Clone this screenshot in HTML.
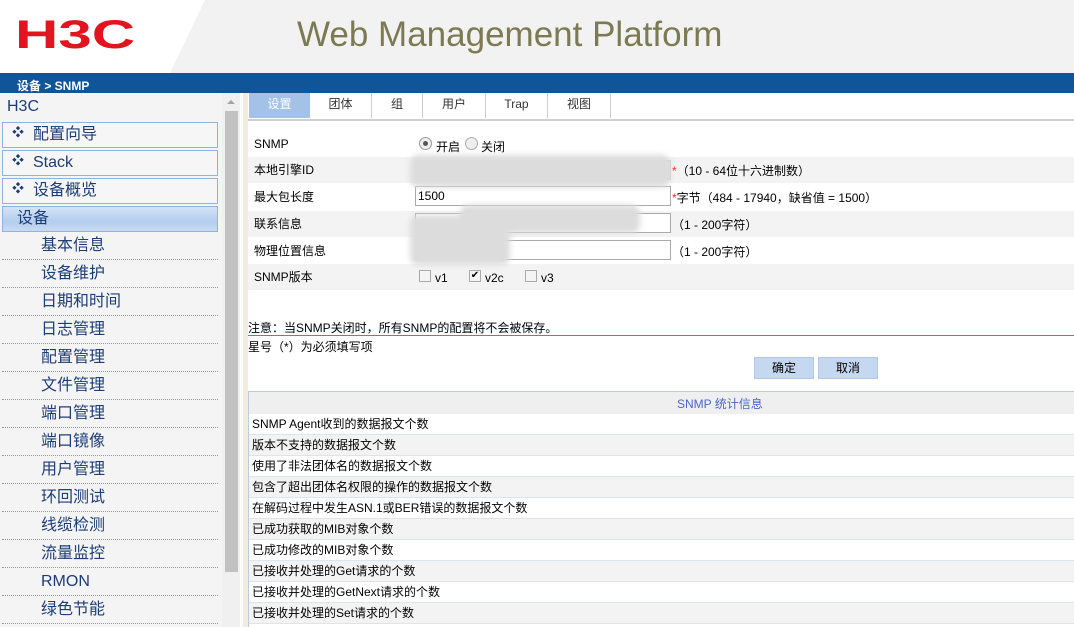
<!DOCTYPE html>
<html><head><meta charset="utf-8"><style>
*{margin:0;padding:0;box-sizing:border-box}
body{width:1074px;height:627px;overflow:hidden;position:relative;background:#fff;font-family:"Liberation Sans","Noto Sans CJK SC",sans-serif;font-size:12px;color:#000}
.a{position:absolute}
.side{left:0;top:93px;width:222px;height:534px;background:#f4f4f4}
.box{position:absolute;left:2px;width:216px;height:26px;border:1px solid #8fb2e0;background:#f6f6f6;font-size:16px;color:#1c3d78;line-height:24px;padding-left:30px}
.box:before{content:"❖";position:absolute;left:9px;top:-3px;font-size:12px;color:#1c3d78}
.sub{position:absolute;left:2px;width:216px;height:28px;border-bottom:1px dotted #999;font-size:16px;color:#1c3d78;line-height:28px;padding-left:39px}
.row{position:absolute;left:248px;width:826px;height:26px;line-height:26px;padding-left:6px;font-size:12px}
.g{background:#f3f3f3}
.inp{position:absolute;left:415px;width:256px;height:20px;border:1px solid #aaa;background:#fff}
.blur{position:absolute;background:#dcdcdc;filter:blur(3px);border-radius:8px}
.tab{position:absolute;top:93px;height:25px;line-height:22px;text-align:center;font-size:12px;color:#333;border-right:1px solid #ccc}
.st{position:absolute;left:248px;width:826px;height:21px;line-height:21px;padding-left:4px;border-bottom:1px solid #dde4ee}
</style></head><body>
<div class="a" style="left:0;top:0;width:1074px;height:73px;background:#fff"></div>
<svg class="a" style="left:0;top:0" width="1074" height="73"><polygon points="205,0 1074,0 1074,73 170,73" fill="#f2f2f2"/></svg>
<div class="a" style="left:15px;top:12px;font-family:'Liberation Sans',sans-serif;font-weight:bold;font-size:40px;color:#e2141e;transform:scaleX(1.5);transform-origin:left;line-height:46px">H3C</div>
<div class="a" style="left:297px;top:14px;font-size:35px;color:#7b7a52;line-height:42px">Web Management Platform</div>
<div class="a" style="left:0;top:73px;width:1074px;height:20px;background:#0f5597;color:#fff;font-size:12px;line-height:26px;padding-left:17px;font-weight:bold">设备 &gt; SNMP</div>
<div class="a side"></div>
<div class="a" style="left:7px;top:98px;font-size:16px;color:#1c3d78">H3C</div>
<div class="box" style="top:122px">配置向导</div>
<div class="box" style="top:150px">Stack</div>
<div class="box" style="top:178px">设备概览</div>
<div class="a" style="left:2px;top:206px;width:216px;height:26px;border:1px solid #8fb2e0;background:linear-gradient(#d4e4f7,#b3cdee 60%,#c8dbf3);font-size:16px;color:#1c3d78;line-height:24px;padding-left:14px">设备</div>
<div class="sub" style="top:232px">基本信息</div>
<div class="sub" style="top:260px">设备维护</div>
<div class="sub" style="top:288px">日期和时间</div>
<div class="sub" style="top:316px">日志管理</div>
<div class="sub" style="top:344px">配置管理</div>
<div class="sub" style="top:372px">文件管理</div>
<div class="sub" style="top:400px">端口管理</div>
<div class="sub" style="top:428px">端口镜像</div>
<div class="sub" style="top:456px">用户管理</div>
<div class="sub" style="top:484px">环回测试</div>
<div class="sub" style="top:512px">线缆检测</div>
<div class="sub" style="top:540px">流量监控</div>
<div class="sub" style="top:568px">RMON</div>
<div class="sub" style="top:596px">绿色节能</div>
<div class="a" style="left:222px;top:93px;width:18px;height:534px;background:#f0f0f0"></div>
<div class="a" style="left:225px;top:111px;width:13px;height:461px;background:#c1c1c1"></div>
<div class="a" style="left:227px;top:100px;width:0;height:0;border:4px solid transparent;border-bottom:4px solid #a3a3a3;border-top:0"></div>
<div class="a" style="left:243px;top:93px;width:5px;height:534px;background:#f1ede0"></div>
<div class="a" style="left:249px;top:93px;width:61px;height:25px;background:#a4c1e8"></div>
<div class="tab" style="left:249px;width:61px;color:#fff;border:0">设置</div>
<div class="tab" style="left:310px;width:62px">团体</div>
<div class="tab" style="left:372px;width:51px">组</div>
<div class="tab" style="left:423px;width:63px">用户</div>
<div class="tab" style="left:486px;width:62px">Trap</div>
<div class="tab" style="left:548px;width:63px">视图</div>
<div class="a" style="left:248px;top:119px;width:826px;height:2px;background:#d0d0d0"></div>
<div class="row" style="top:131px">SNMP</div>
<div class="row g" style="top:157px">本地引擎ID</div>
<div class="row" style="top:184px">最大包长度</div>
<div class="row g" style="top:211px">联系信息</div>
<div class="row" style="top:238px">物理位置信息</div>
<div class="row g" style="top:264px">SNMP版本</div>
<div class="a" style="left:419px;top:137px;width:13px;height:13px;border:1px solid #999;border-radius:50%;background:#eee"><div style="margin:3px;width:5px;height:5px;border-radius:50%;background:#555"></div></div>
<div class="a" style="left:436px;top:138px;font-size:12px">开启</div>
<div class="a" style="left:465px;top:137px;width:13px;height:13px;border:1px solid #aaa;border-radius:50%;background:#eee"></div>
<div class="a" style="left:481px;top:138px;font-size:12px">关闭</div>
<div class="inp" style="top:160px;background:#ddd;border-color:#ccc"></div>
<div class="inp" style="top:186px;padding-left:2px;line-height:18px;font-size:12px">1500</div>
<div class="inp" style="top:213px"></div>
<div class="inp" style="top:240px"></div>
<div class="blur" style="left:410px;top:155px;width:260px;height:32px"></div>
<div class="blur" style="left:460px;top:205px;width:180px;height:28px"></div>
<div class="blur" style="left:410px;top:215px;width:100px;height:50px"></div>
<div class="a" style="left:672px;top:162px">
<span style="color:#e33">*</span>（10 - 64位十六进制数）</div>
<div class="a" style="left:672px;top:189px"><span style="color:#e33">*</span>字节（484 - 17940，缺省值 = 1500）</div>
<div class="a" style="left:672px;top:216px">（1 - 200字符）</div>
<div class="a" style="left:672px;top:243px">（1 - 200字符）</div>
<div class="a" style="left:419px;top:270px;width:12px;height:12px;border:1px solid #aaa;background:#f4f4f4"></div>
<div class="a" style="left:435px;top:271px">v1</div>
<div class="a" style="left:469px;top:270px;width:12px;height:12px;border:1px solid #aaa;background:#f4f4f4;font-size:10px;line-height:10px;text-align:center">✔</div>
<div class="a" style="left:485px;top:271px">v2c</div>
<div class="a" style="left:525px;top:270px;width:12px;height:12px;border:1px solid #aaa;background:#f4f4f4"></div>
<div class="a" style="left:541px;top:271px">v3</div>
<div class="a" style="left:248px;top:319px">注意：当SNMP关闭时，所有SNMP的配置将不会被保存。</div>
<div class="a" style="left:248px;top:335px;width:826px;height:1px;background:#3a8fd0"></div>
<div class="a" style="left:248px;top:338px">星号（*）为必须填写项</div>
<div class="a" style="left:754px;top:357px;width:60px;height:22px;background:#c5d8f0;border:1px solid #b0c8e8;text-align:center;line-height:20px">确定</div>
<div class="a" style="left:818px;top:357px;width:60px;height:22px;background:#c5d8f0;border:1px solid #b0c8e8;text-align:center;line-height:20px">取消</div>
<div class="a" style="left:248px;top:391px;width:826px;height:23px;background:#efefef;border-top:1px solid #b8cce6;border-left:1px solid #b8cce6;line-height:24px;color:#4a66cc;padding-left:428px">SNMP 统计信息</div>
<div class="st" style="top:414px">SNMP Agent收到的数据报文个数</div>
<div class="st g" style="top:435px">版本不支持的数据报文个数</div>
<div class="st" style="top:456px">使用了非法团体名的数据报文个数</div>
<div class="st g" style="top:477px">包含了超出团体名权限的操作的数据报文个数</div>
<div class="st" style="top:498px">在解码过程中发生ASN.1或BER错误的数据报文个数</div>
<div class="st g" style="top:519px">已成功获取的MIB对象个数</div>
<div class="st" style="top:540px">已成功修改的MIB对象个数</div>
<div class="st g" style="top:561px">已接收并处理的Get请求的个数</div>
<div class="st" style="top:582px">已接收并处理的GetNext请求的个数</div>
<div class="st g" style="top:603px">已接收并处理的Set请求的个数</div>
<div class="a" style="left:248px;top:414px;width:1px;height:213px;background:#b8cce6"></div>
</body></html>
